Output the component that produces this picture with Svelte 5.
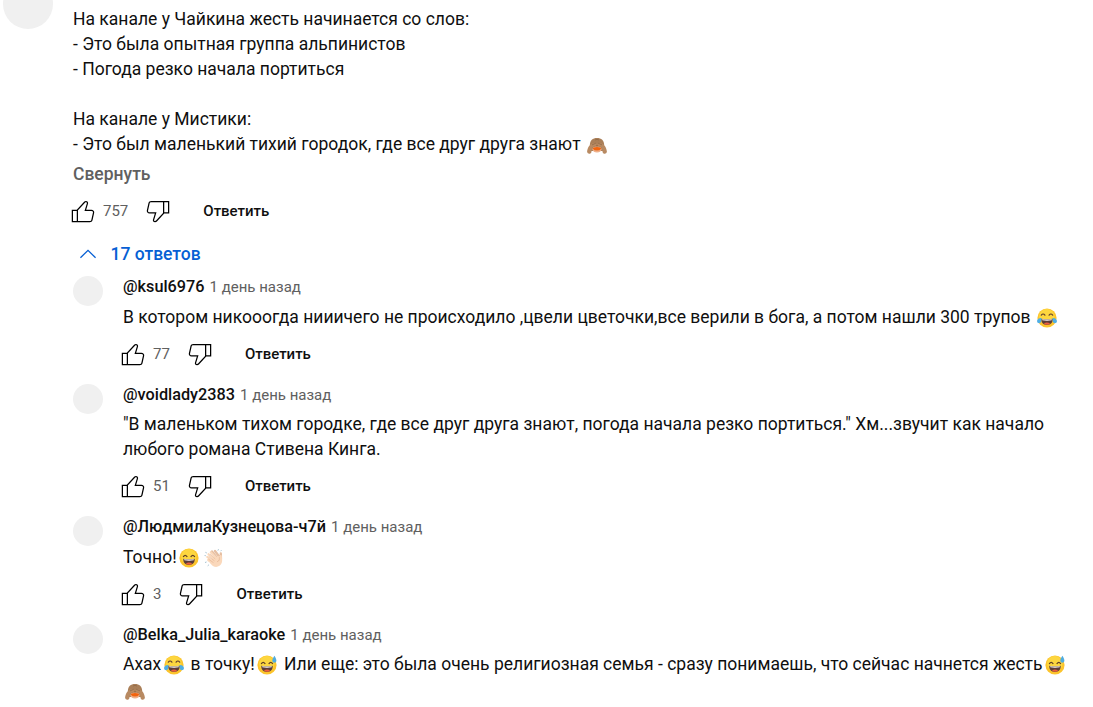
<script>
    // Respuestas del hilo; dentro del texto los emojis van como {nombre}
    const replies = [
        {
            author: '@ksul6976',
            text: 'В котором никооогда нииичего не происходило ,цвели цветочки,все верили в бога, а потом нашли 300 трупов {joy}',
            likes: 77,
        },
        {
            author: '@voidlady2383',
            text: '"В маленьком тихом городке, где все друг друга знают, погода начала резко портиться." Хм...звучит как начало любого романа Стивена Кинга.',
            likes: 51,
        },
        {
            author: '@ЛюдмилаКузнецова-ч7й',
            text: 'Точно!{smile}{clap}',
            likes: 3,
        },
        {
            author: '@Belka_Julia_karaoke',
            text: 'Ахах{joy} в точку!{sweat} Или еще: это была очень религиозная семья - сразу понимаешь, что сейчас начнется жесть{sweat} {monkey}',
        },
    ];

    const mainText = `На канале у Чайкина жесть начинается со слов:
- Это была опытная группа альпинистов
- Погода резко начала портиться

На канале у Мистики:
- Это был маленький тихий городок, где все друг друга знают {monkey}`;

    const split = (text) => text.split(/(\{\w+\})/).filter((part) => part !== '');
</script>

{#snippet emoji(name)}
    <svg class="emoji" viewBox="0 0 20 20" aria-hidden="true">
        {#if name === 'monkey'}
            <path d="M2.800 10C3 5.500 5.600 3 10 3s7 2.500 7.200 7L16 16H4z" fill="#aa7f58" />
            <path d="M.1 16.800C.4 13 2 9.600 5.600 8.400c2.500-.7 4.400-.3 4 1.200-.5 1.400-2.200 1.600-3.800 2.500-1.400 1.300-.8 3.300-1.500 5.300-.8 2-3.900 1.700-4.200-.6z" fill="#b88a62" />
            <path d="M19.900 16.800C19.600 13 18 9.600 14.400 8.400c-2.500-.7-4.400-.3-4 1.200.5 1.400 2.200 1.600 3.800 2.500 1.400 1.300.8 3.300 1.500 5.300.8 2 3.900 1.700 4.200-.6z" fill="#b88a62" />
            <path d="M5.500 14.200q0-2.800 4.500-2.800t4.500 2.800q-.6 3.200-4.500 3.200t-4.500-3.200z" fill="#edb08a" />
            <path d="M5.900 13.700q0-1.800 4.100-1.800t4.100 1.800q-1.300 1.900-4.100 1.900t-4.100-1.900z" fill="#f2640f" />
            <path d="M5 9.900 8.900 8.200M15 9.900 11.100 8.200M9 10.800h2" stroke="#82603f" stroke-width=".6" />
            <path d="M8 5q2-1.300 4 0" stroke="#8a6545" stroke-width=".7" fill="none" />
        {:else if name === 'clap'}
            <g stroke="#e6bfa2" stroke-width="2.300" stroke-linecap="round">
                <path d="M8 3.500 13 10M11 3 15.500 9M16.800 5.500 17 11" />
            </g>
            <g stroke="#fad8bb" stroke-width="2.200" stroke-linecap="round">
                <path d="M6.800 4.200 13 11M4.500 6.200 12 13M3.300 9 11 15M4.200 12 11 17M16.700 8 17 12" />
            </g>
            <path d="M9 10 15 8l3 2.500q.8 5-2.500 7.300c-2.400 1.700-5.300 1.400-7.500-.5L6 15z" fill="#fad8bb" />
            <path d="M6.100 6 11.300 11M4.500 8.300 10.500 12.900M4.500 11.200 9.500 14.700M15.400 9.200l-.2 3.200q-1.500.3-2 1.700" stroke="#dca985" stroke-width=".5" fill="none" />
            <path d="M1.400 4.300 2.800 5M.6 7.500l1.200.2M1 14.500l1.500-.5M3.700 17.800l1.200-1M14.500 1.200l-.6 1.400M17.500 2.200l-1 1" stroke="#9bb9c9" stroke-width=".9" />
        {:else}
            <circle cx="10" cy="10" r="9.600" fill="#fcc42c" />
            <circle cx="9.800" cy="8.800" r="7.700" fill="#fdd63f" />
            {#if name === 'joy'}
                <path d="M4.300 7.200q1.800-2.400 3.600 0M12.100 7.200q1.800-2.400 3.600 0" stroke="#65422e" stroke-width="1.200" fill="none" stroke-linecap="round" />
            {:else}
                <path d="M4.400 8.600q1.800-2.600 3.600 0M12 8.600q1.800-2.600 3.600 0" stroke="#604027" stroke-width="1.200" fill="none" stroke-linecap="round" />
            {/if}
            <path d="M4.300 10.800q5.700 1 11.400 0c.2 4-2 6.200-5.700 6.200s-5.900-2.200-5.700-6.200z" fill="#5d3d38" />
            <path d="M5.100 11.200q4.900.8 9.800 0l-.3 1.100q-4.600.7-9.200 0z" fill="#fff" />
            <path d="M6.800 15.700q3.200-2.500 6.400 0-2.900 1.900-6.400 0z" fill="#ed5d3c" />
            {#if name === 'joy'}
                <path d="M4.500 9.900C1.500 9.700-.1 11.400.1 13.400c.2 2.300 3.600 2.300 4.100 0zM15.500 9.900c3-.2 4.600 1.500 4.400 3.500-.2 2.300-3.600 2.300-4.100 0z" fill="#4faee5" />
            {:else if name === 'sweat'}
                <path d="M17.400.8C16 2.900 15.300 4.300 15.300 5.700c0 2.600 4.100 2.600 4.100 0 0-1.500-.9-3-2-4.900z" fill="#50acdf" />
            {/if}
        {/if}
    </svg>
{/snippet}

{#snippet richText(text)}
    {#each split(text) as part}{#if part.startsWith('{')}{@render emoji(part.slice(1, -1))}{:else}{part}{/if}{/each}
{/snippet}

{#snippet toolbar(likes)}
    <div class="toolbar">
        <button class="icon" aria-label="Нравится">
            <svg viewBox="0 0 24 24">
                <path d="M18.77,11h-4.23l1.52-4.94C16.38,5.03,15.54,4,14.38,4c-0.58,0-1.14,0.24-1.52,0.65L7,11H3v10h4h1h9.43c1.06,0,1.98-0.67,2.19-1.61l1.34-6C21.23,12.15,20.18,11,18.77,11z M7,20H4v-8h3V20z M19.98,13.17l-1.34,6C18.54,19.65,18.03,20,17.43,20H8v-8.61l5.6-6.06C13.79,5.12,14.08,5,14.38,5c0.26,0,0.5,0.11,0.63,0.3c0.07,0.1,0.15,0.26,0.09,0.47l-1.52,4.94L13.18,12h1.35h4.23c0.41,0,0.8,0.17,1.03,0.46C19.92,12.61,20.05,12.86,19.98,13.17z" />
            </svg>
        </button>
        <span class="likes">{likes}</span>
        <button class="icon" aria-label="Не нравится">
            <svg viewBox="0 0 24 24">
                <path d="M17,4h-1H6.57C5.5,4,4.59,4.67,4.38,5.61l-1.34,6C2.77,12.85,3.82,14,5.23,14h4.23l-1.52,4.94C7.62,19.97,8.46,21,9.62,21c0.58,0,1.14-0.24,1.52-0.65L17,14h4V4H17z M10.4,19.67C10.21,19.88,9.92,20,9.62,20c-0.26,0-0.5-0.11-0.63-0.3c-0.07-0.1-0.15-0.26-0.09-0.47l1.52-4.94l0.4-1.29H9.46H5.23c-0.41,0-0.8-0.17-1.03-0.46c-0.12-0.15-0.25-0.4-0.18-0.72l1.34-6C5.46,5.35,5.97,5,6.57,5H16v8.61L10.4,19.67z M20,13h-3V5h3V13z" />
            </svg>
        </button>
        <button class="answer">Ответить</button>
    </div>
{/snippet}

<main>
    <div class="avatar big"></div>

    <section class="thread">
        <div class="text main-text">{@render richText(mainText)}</div>
        <button class="collapse">Свернуть</button>
        {@render toolbar(757)}

        <button class="toggle">
            <svg viewBox="0 0 24 24">
                <polygon points="18.4,14.6 12,8.3 5.6,14.6 6.3,15.4 12,9.7 17.7,15.4" />
            </svg>
            17 ответов
        </button>

        {#each replies as reply}
            <article class="reply">
                <div class="avatar"></div>
                <div class="body">
                    <div class="header">
                        <span class="author">{reply.author}</span>
                        <span class="time">1 день назад</span>
                    </div>
                    <div class="text">{@render richText(reply.text)}</div>
                    {#if reply.likes}
                        {@render toolbar(reply.likes)}
                    {/if}
                </div>
            </article>
        {/each}
    </section>
</main>

<style>
    :global(body) {
        margin: 0;
        background: #fff;
        overflow: hidden;
    }

    main {
        display: flex;
        gap: 20px;
        height: 707px;
        padding-left: 3px;
        overflow: hidden;
        box-sizing: border-box;
        font-family: Roboto, Arial, sans-serif;
        color: #0f0f0f;
    }

    button {
        display: flex;
        align-items: center;
        padding: 0;
        border: none;
        background: none;
        font-family: inherit;
        color: inherit;
        cursor: pointer;
    }

    .avatar {
        flex: none;
        width: 30px;
        height: 30px;
        border-radius: 50%;
        background: #f0f0f0;
    }

    .avatar.big {
        width: 50px;
        height: 50px;
        margin-top: -21px;
    }

    .thread {
        width: 1000px;
        padding-top: 7px;
    }

    .text {
        font-size: 17.5px;
        line-height: 25px;
    }

    .main-text {
        height: 151px;
        white-space: pre-line;
    }

    .emoji {
        width: 20px;
        height: 20px;
        margin: 4px 2.5px 0 2.4px;
        vertical-align: -5px;
    }

    .main-text .emoji {
        margin-top: 0;
    }

    .reply:last-child .emoji {
        margin-top: 3.4px;
    }

    .collapse {
        height: 31px;
        font-size: 17.5px;
        font-weight: 500;
        color: #606060;
    }

    .toolbar {
        display: flex;
        align-items: center;
        height: 40px;
        margin-left: -5px;
    }

    .thread > .toolbar {
        margin-top: 2px;
    }

    .icon svg {
        display: block;
        width: 30px;
        height: 30px;
    }

    .likes {
        margin: 0 15px 0 5px;
        font-size: 15px;
        color: #606060;
    }

    .answer {
        margin-left: 30px;
        font-size: 15px;
        font-weight: 500;
    }

    .toggle {
        height: 45px;
        gap: 7.5px;
        font-size: 17.5px;
        font-weight: 500;
        color: #065fd4;
    }

    .toggle svg {
        width: 30px;
        height: 30px;
        fill: currentColor;
    }

    .reply {
        display: flex;
        gap: 20px;
        margin-bottom: 10px;
    }

    .body {
        width: 945px;
    }

    .header {
        display: flex;
        align-items: baseline;
        gap: 5px;
        height: 25px;
        margin-bottom: 3px;
        line-height: 22px;
    }

    .author {
        font-size: 16.25px;
        font-weight: 500;
    }

    .time {
        font-size: 15px;
        color: #606060;
    }

    .body .toolbar {
        margin-top: 4px;
    }
</style>
